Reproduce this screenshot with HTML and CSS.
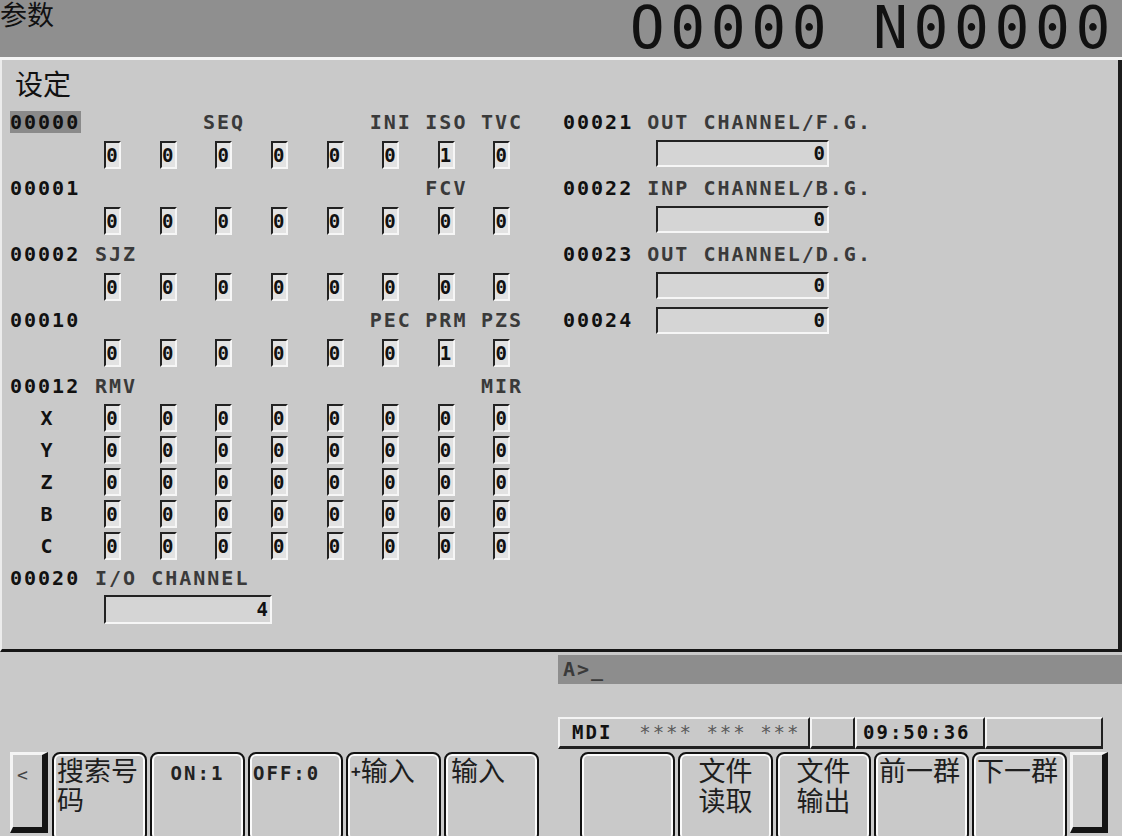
FILE: index.html
```html
<!DOCTYPE html>
<html lang="zh-CN">
<head>
  <meta charset="UTF-8" />
  <title>参数 - 设定</title>
  <link rel="stylesheet" href="styles.css">
</head>
<body>

  <header class="title-bar">
    <span class="screen-name cjk">参数</span>
    <span class="prog-no">O0000 N00000</span>
  </header>

  <main class="panel">
    <div class="panel-title cjk">设定</div>

    <div class="panel-body">
      <section class="bits">
        <div class="row row-label">
          <span class="no hl">00000</span>
          <span></span><span></span><span class="name">SEQ</span><span></span><span></span>
          <span class="name">INI</span><span class="name">ISO</span><span class="name">TVC</span>
        </div>
        <div class="row row-bits">
          <span></span>
          <span class="bit">0</span><span class="bit">0</span><span class="bit">0</span><span class="bit">0</span>
          <span class="bit">0</span><span class="bit">0</span><span class="bit">1</span><span class="bit">0</span>
        </div>

        <div class="row row-label">
          <span class="no">00001</span>
          <span></span><span></span><span></span><span></span><span></span><span></span>
          <span class="name">FCV</span><span></span>
        </div>
        <div class="row row-bits">
          <span></span>
          <span class="bit">0</span><span class="bit">0</span><span class="bit">0</span><span class="bit">0</span>
          <span class="bit">0</span><span class="bit">0</span><span class="bit">0</span><span class="bit">0</span>
        </div>

        <div class="row row-label">
          <span class="no">00002</span>
          <span class="name name-wide">SJZ</span>
        </div>
        <div class="row row-bits">
          <span></span>
          <span class="bit">0</span><span class="bit">0</span><span class="bit">0</span><span class="bit">0</span>
          <span class="bit">0</span><span class="bit">0</span><span class="bit">0</span><span class="bit">0</span>
        </div>

        <div class="row row-label">
          <span class="no">00010</span>
          <span></span><span></span><span></span><span></span><span></span>
          <span class="name">PEC</span><span class="name">PRM</span><span class="name">PZS</span>
        </div>
        <div class="row row-bits">
          <span></span>
          <span class="bit">0</span><span class="bit">0</span><span class="bit">0</span><span class="bit">0</span>
          <span class="bit">0</span><span class="bit">0</span><span class="bit">1</span><span class="bit">0</span>
        </div>

        <div class="row row-label">
          <span class="no">00012</span>
          <span class="name name-first">RMV</span>
          <span></span><span></span><span></span><span></span><span></span><span></span>
          <span class="name">MIR</span>
        </div>
        <div class="row row-axis">
          <span class="axis">X</span>
          <span class="bit">0</span><span class="bit">0</span><span class="bit">0</span><span class="bit">0</span>
          <span class="bit">0</span><span class="bit">0</span><span class="bit">0</span><span class="bit">0</span>
        </div>
        <div class="row row-axis">
          <span class="axis">Y</span>
          <span class="bit">0</span><span class="bit">0</span><span class="bit">0</span><span class="bit">0</span>
          <span class="bit">0</span><span class="bit">0</span><span class="bit">0</span><span class="bit">0</span>
        </div>
        <div class="row row-axis">
          <span class="axis">Z</span>
          <span class="bit">0</span><span class="bit">0</span><span class="bit">0</span><span class="bit">0</span>
          <span class="bit">0</span><span class="bit">0</span><span class="bit">0</span><span class="bit">0</span>
        </div>
        <div class="row row-axis">
          <span class="axis">B</span>
          <span class="bit">0</span><span class="bit">0</span><span class="bit">0</span><span class="bit">0</span>
          <span class="bit">0</span><span class="bit">0</span><span class="bit">0</span><span class="bit">0</span>
        </div>
        <div class="row row-axis">
          <span class="axis">C</span>
          <span class="bit">0</span><span class="bit">0</span><span class="bit">0</span><span class="bit">0</span>
          <span class="bit">0</span><span class="bit">0</span><span class="bit">0</span><span class="bit">0</span>
        </div>

        <div class="row row-label">
          <span class="no">00020</span>
          <span class="name name-wide">I/O CHANNEL</span>
        </div>
        <div class="row row-field">
          <span></span>
          <span class="field field-io">4</span>
        </div>
      </section>

      <section class="words">
        <div class="w-label"><span class="no">00021</span> <span class="name">OUT CHANNEL/F.G.</span></div>
        <div class="w-value"><span class="field">0</span></div>

        <div class="w-label"><span class="no">00022</span> <span class="name">INP CHANNEL/B.G.</span></div>
        <div class="w-value"><span class="field">0</span></div>

        <div class="w-label"><span class="no">00023</span> <span class="name">OUT CHANNEL/D.G.</span></div>
        <div class="w-value"><span class="field">0</span></div>

        <div class="w-inline"><span class="no w-no">00024</span><span class="field">0</span></div>
      </section>
    </div>
  </main>

  <div class="cmd-line">A&gt;_</div>

  <div class="status">
    <div class="st st-mode">MDI  <span class="stars">**** *** ***</span></div>
    <div class="st st-blank"></div>
    <div class="st st-time">09:50:36</div>
    <div class="st st-rest"></div>
  </div>

  <nav class="softkeys">
    <div class="sk-end sk-prev">&lt;</div>
    <div class="sk-group">
      <div class="sk cjk">搜索号码</div>
      <div class="sk sk-mono sk-center">ON:1</div>
      <div class="sk sk-mono">OFF:0</div>
      <div class="sk cjk"><span class="plus">+</span>输入</div>
      <div class="sk cjk sk-pad">输入</div>
    </div>
    <div class="sk-group sk-right">
      <div class="sk"></div>
      <div class="sk cjk sk-center sk-two">文件<br>读取</div>
      <div class="sk cjk sk-center sk-two">文件<br>输出</div>
      <div class="sk cjk">前一群</div>
      <div class="sk cjk">下一群</div>
    </div>
    <div class="sk-end sk-next"></div>
  </nav>

</body>
</html>
```

FILE: styles.css
```css
* {
  box-sizing: border-box;
}

html, body {
  margin: 0;
  width: 1122px;
  height: 836px;
  overflow: hidden;
}

body {
  background: #c9c9c9;
  color: #111;
  font-family: 'DejaVu Sans Mono', 'Liberation Mono', monospace;
  font-weight: bold;
  font-size: 20px;
  letter-spacing: 2px;
}

.cjk {
  font-family: 'Noto Sans CJK SC', sans-serif;
  font-weight: normal;
  letter-spacing: 0;
}

/* top bar */
.title-bar {
  height: 60px;
  background: #8f8f8f;
  border-bottom: 3px solid #f4f4f4;
  display: flex;
  justify-content: space-between;
  align-items: flex-start;
}

.screen-name {
  font-size: 27px;
  line-height: 28px;
}

.prog-no {
  font-weight: normal;
  font-size: 58px;
  line-height: 57px;
  letter-spacing: 5.6px;
  margin-right: 6px;
}

/* parameter panel */
.panel {
  height: 592px;
  border-left: 2px solid #ececec;
  border-right: 4px solid #1c1c1c;
  border-bottom: 3px solid #161616;
  padding-left: 8px;
}

.panel-title {
  height: 46px;
  padding: 4px 0 0 5px;
  font-size: 28px;
  line-height: 38px;
}

.panel-body {
  display: flex;
  gap: 33px;
}

.bits {
  width: 520px;
}

.row {
  display: grid;
  grid-template-columns: 75px repeat(8, 55.6px);
}

.row-label {
  height: 32px;
  align-items: center;
}

.row-bits {
  height: 34px;
  align-items: start;
}

.row-axis {
  height: 32px;
  align-items: start;
}

.row-field {
  height: 34px;
  align-items: start;
}

.no {
  color: #111;
}

.no.hl {
  justify-self: start;
  background: #8a8a8a;
  line-height: 22px;
  padding-right: 1px;
}

.name {
  color: #3a3a3a;
  text-align: center;
  white-space: nowrap;
}

.name-wide {
  grid-column: 2 / span 8;
  text-align: left;
  padding-left: 10px;
}

.name-first {
  text-align: left;
  padding-left: 10px;
}

.axis {
  text-align: center;
  line-height: 32px;
}

.bit {
  justify-self: center;
  width: 17px;
  height: 28px;
  margin-top: 3px;
  background: #e2e2e2;
  border-style: solid;
  border-width: 2px;
  border-color: #222 #f6f6f6 #f6f6f6 #222;
  font-size: 19px;
  line-height: 24px;
  letter-spacing: 0;
}

.row-axis .bit {
  margin-top: 2px;
}

.field {
  display: block;
  width: 173px;
  height: 27px;
  background: #d5d5d5;
  border-style: solid;
  border-width: 2px;
  border-color: #222 #f6f6f6 #f6f6f6 #222;
  text-align: right;
  padding-right: 2px;
  font-size: 19px;
  line-height: 23px;
  letter-spacing: 0;
}

.field-io {
  grid-column: 2 / span 4;
  width: 168px;
  height: 29px;
  margin: 1px 0 0 19px;
  line-height: 25px;
}

/* right column */
.words {
  display: flex;
  flex-direction: column;
}

.w-label {
  height: 32px;
  line-height: 32px;
  white-space: pre;
}

.w-value {
  height: 34px;
  padding: 2px 0 0 93px;
}

.w-inline {
  height: 32px;
  display: flex;
  align-items: center;
}

.w-no {
  width: 93px;
}

/* command line + status */
.cmd-line {
  margin: 3px 0 0 558px;
  height: 29px;
  background: #8d8d8d;
  color: #3a3a3a;
  padding-left: 5px;
  line-height: 29px;
}

.status {
  margin: 33px 0 0 558px;
  width: 545px;
  height: 32px;
  display: flex;
}

.st {
  height: 32px;
  border-style: solid;
  border-width: 2px 2px 3px 2px;
  border-color: #f4f4f4 #202020 #202020 #f4f4f4;
  font-size: 19px;
  line-height: 27px;
  white-space: pre;
}

.st-mode {
  width: 252px;
  padding-left: 12px;
}

.stars {
  color: #5a5a5a;
  font-weight: normal;
}

.st-blank {
  width: 45px;
}

.st-time {
  width: 130px;
  padding-left: 6px;
}

.st-rest {
  width: 118px;
}

/* soft keys */
.softkeys {
  margin-top: 3px;
  padding-left: 10px;
  display: flex;
  height: 90px;
}

.sk-group {
  display: flex;
  gap: 3px;
  margin-left: 4px;
}

.sk-right {
  margin-left: 41px;
}

.sk {
  width: 95px;
  height: 90px;
  border: 2px solid #111;
  border-radius: 8px;
  box-shadow: inset 0 0 0 2px #fbfbfb;
  padding: 1px 3px 0 3px;
  font-size: 27px;
  line-height: 29px;
  color: #1e1e1e;
}

.sk-two {
  line-height: 30px;
}

.sk-mono {
  font-size: 19px;
  padding-top: 5px;
  color: #222;
}

.sk-center {
  text-align: center;
}

.sk-pad {
  padding-left: 5px;
}

.plus {
  font-family: 'DejaVu Sans Mono', monospace;
  font-weight: bold;
  font-size: 16px;
  vertical-align: 4px;
}

.sk-end {
  width: 38px;
  height: 81px;
  border-style: solid;
  border-width: 3px 6px 6px 3px;
  border-color: #f4f4f4 #141414 #141414 #f4f4f4;
}

.sk-prev {
  font-weight: normal;
  font-size: 18px;
  color: #444;
  padding: 9px 0 0 4px;
}

.sk-next {
  margin-left: 3px;
}
```
